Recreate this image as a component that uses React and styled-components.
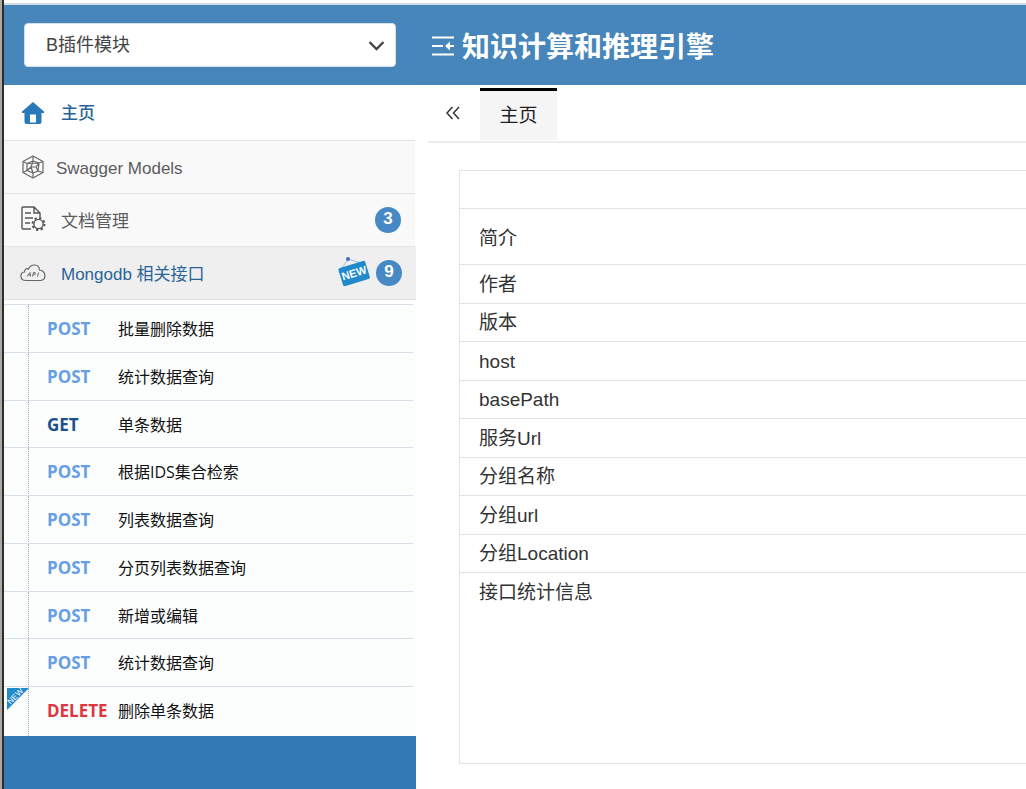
import React from 'react';
import styled, { createGlobalStyle } from 'styled-components';

const GlobalStyle = createGlobalStyle`
  *, *::before, *::after { box-sizing: border-box; }
  body { margin: 0; background: #fff; font-family: "Liberation Sans", "Noto Sans CJK SC", sans-serif; color: #333; }
  a { color: inherit; text-decoration: none; }
  ul { list-style: none; margin: 0; padding: 0; }
`;

const Page = styled.div`
  display: flex;
  flex-direction: column;
  min-height: 100vh;
  border-left: 2px solid #aaa9a4;
  overflow-x: hidden;
`;

const Frame = styled.div`
  flex: 1;
  display: flex;
  flex-direction: column;
  border-left: 2px solid #2e2d2b;
`;

const Header = styled.header`
  display: flex;
  align-items: center;
  height: 85px;
  padding: 5px 20px 0;
  background: linear-gradient(#fff 3px, #d3dee6 3px, #d3dee6 5px, #4686ba 5px);
`;

const SelectWrap = styled.div`
  position: relative;
  width: 372px;
`;

const Select = styled.select`
  display: block;
  width: 100%;
  height: 44px;
  padding: 0 48px 0 21px;
  border: 1px solid #d5e0e8;
  border-radius: 4px;
  background: #fff;
  color: #444;
  font: 18px "Liberation Sans", "Noto Sans CJK SC", sans-serif;
  appearance: none;
`;

const SelectArrow = styled.svg`
  position: absolute;
  right: 11px;
  top: 17px;
  pointer-events: none;
`;

const FoldButton = styled.button`
  display: flex;
  margin-left: 35px;
  padding: 2px 0 0;
  border: 0;
  background: none;
  color: #fff;
`;

const Title = styled.h1`
  margin: 0 0 0 7px;
  padding-top: 5px;
  color: #fff;
  font-size: 28px;
  line-height: 40px;
  font-weight: 700;
  white-space: nowrap;
`;

const Body = styled.div`
  flex: 1;
  display: flex;
`;

const Sidebar = styled.nav`
  flex: none;
  display: flex;
  flex-direction: column;
  width: 412px;
`;

const MenuLink = styled.a`
  display: flex;
  align-items: center;
  height: ${(p) => (p.$home ? 56 : 53)}px;
  padding: 0 14px 0 16px;
  margin-right: ${(p) => (p.$active ? 0 : 1)}px;
  border-bottom: 1px solid #e3e3e5;
  background: ${(p) => (p.$active ? '#efeff0' : p.$home ? '#fefefe' : '#f9f9fa')};
  color: ${(p) => (p.$active || p.$home ? '#2a6496' : '#5c5c5c')};
  font-size: 17px;
  line-height: 24px;
`;

const MenuIcon = styled.span`
  display: flex;
  flex: none;
  width: 26px;
  margin-right: ${(p) => (p.$tight ? 10 : 15)}px;
  justify-content: center;
`;

const MenuText = styled.span`
  flex: 1;
  padding-top: 3px;
  font-weight: ${(p) => (p.$strong ? 500 : 400)};
`;

const Badge = styled.span`
  width: 26px;
  height: 26px;
  border-radius: 50%;
  background: #4789c5;
  color: #fff;
  font-size: 17px;
  line-height: 24px;
  font-weight: 700;
  text-align: center;
`;

const ApiList = styled.ul`
  padding-top: 4px;
  background: #fcfefe;
`;

const ApiItem = styled.li`
  position: relative;
  display: grid;
  height: 48px;

  &:nth-child(4n + 3) { height: 47px; }
  &:last-child { height: 50px; }
`;

const ApiLink = styled.a`
  display: flex;
  margin-right: 3px;
  border-top: 1px solid #d9dfe9;
  color: #111;
  font: 16px/48px "Open Sans", "Noto Sans CJK SC", sans-serif;

  &::before {
    content: "";
    width: 25px;
    margin-right: 18px;
    border-right: 1px dotted #9eacbd;
  }
`;

const methodColors = { POST: '#689fe2', GET: '#1c4f8c', DELETE: '#dc373e' };

const Method = styled.span`
  width: 71px;
  color: ${(p) => methodColors[p.$method]};
  font-size: 17px;
  font-weight: 700;
`;

const Corner = styled.svg`
  position: absolute;
  left: 3px;
  top: 2px;
`;

const SidebarFill = styled.div`
  flex: 1;
  min-height: 53px;
  background: #3379b5;
`;

const Main = styled.main`
  flex: 1;
  min-width: 0;
  padding: 0 0 25px 12px;
`;

const TabBar = styled.div`
  display: flex;
  height: 58px;
  padding-top: 3px;
  border-bottom: 2px solid #ececec;
`;

const CollapseButton = styled.button`
  display: flex;
  align-items: center;
  justify-content: center;
  width: 52px;
  padding: 0 3px 4px 0;
  border: 0;
  background: none;
  color: #333;
`;

const Tab = styled.button`
  width: 77px;
  height: 52px;
  padding: 0 0 4px;
  border: 0;
  border-top: 3px solid #000;
  background: #f5f5f6;
  color: #222;
  font: 19px "Liberation Sans", "Noto Sans CJK SC", sans-serif;
`;

const Panel = styled.section`
  min-height: 594px;
  margin: 27px 0 0 31px;
  border: 1px solid #e2e2e2;
  border-right: 0;
`;

const InfoTable = styled.table`
  width: 100%;
  border-collapse: separate;
  border-spacing: 0;
  color: #333;
  font-size: 19px;
  line-height: 24px;

  th, td {
    height: 38px;
    padding: 1px 19px 0;
    border-bottom: 1px solid #e2e2e2;
    font-weight: 400;
    text-align: left;
  }
  tbody tr:nth-child(even) > * { height: 39px; }
  tbody tr:first-child > * { height: 56px; padding-top: 4px; }
  tbody tr:last-child > * { border-bottom: 0; }
`;

const HomeIcon = () => (
  <svg width="22" height="22" viewBox="0 0 22 22" aria-hidden="true">
    <path fill="#2978b8" fillRule="evenodd" d="M11 0 22 9.500V11H19.500V20Q19.500 22 17.500 22H4.500Q2.500 22 2.500 20V11H0V9.500ZM8 12.500V20.500H14V12.500Z" />
  </svg>
);

const ModelIcon = () => (
  <svg width="22" height="24" viewBox="0 0 22 24" fill="none" stroke="#666" strokeWidth="1.2" strokeLinejoin="round" aria-hidden="true">
    <path d="M11 1 21 6.500V17.500L11 23 1 17.500V6.500Z" />
    <path d="M11 1V6M1 6.500 5 8.500M21 6.500 17 8M1 17.500 5 15.500M21 17.500 16 16M11 23V18M5 8.500 17 8 16 16 11 18 5 15.500ZM5 8.500 11 6 17 8M11 6 9 12 5 15.500M9 12H14L17 8M14 12 16 16M9 12 11 18" />
  </svg>
);

const DocIcon = () => (
  <svg width="26" height="28" viewBox="0 0 26 28" fill="none" stroke="#555" strokeWidth="1.400" aria-hidden="true">
    <path d="M11 23H3Q2 23 2 22V2Q2 1 3 1H14L20 7V11M14 1V7H20M5 7H11M5 12H13M5 17H10" />
    <circle cx="18.500" cy="18" r="4.600" />
    <circle cx="18.500" cy="18" r="6" strokeDasharray="2.300 2.400" strokeWidth="2" />
  </svg>
);

const CloudIcon = () => (
  <svg width="26" height="18" viewBox="0 0 26 18" fill="none" stroke="#666" strokeWidth="1.200" aria-hidden="true">
    <path d="M6 16.500C-.5 16.500-.5 8.500 4.500 8 4.500 5 7 4 8.500 5 11-.5 19-.5 19.500 6 26 6.500 27 16.500 20.500 16.500Z" />
    <path strokeWidth="1" d="M7 12.500 10 8.500 10.500 12.500M8.500 11H10.500M12.500 12.500 13.500 8.500H15Q16.500 10.500 13.500 11M17.500 12.500 18.500 8.500" />
  </svg>
);

const NewTag = () => (
  <svg width="32" height="30" viewBox="0 0 32 30" aria-hidden="true">
    <path d="M4 12 10 3 23 7" fill="none" stroke="#9dbdd4" />
    <circle cx="10" cy="3" r="2" fill="#3f6fc0" />
    <g transform="rotate(-17 16 17)">
      <rect x="2" y="8" width="28" height="19" rx="2" fill="#208acb" />
      <text x="16" y="21" textAnchor="middle" fill="#fff" fontFamily="Liberation Sans, sans-serif" fontSize="11" fontWeight="700">NEW</text>
    </g>
  </svg>
);

const TagSlot = styled.span`
  display: flex;
  margin-right: 6px;
  padding-bottom: 4px;
`;

const menu = [
  { label: '主页', icon: HomeIcon, home: true },
  { label: 'Swagger Models', icon: ModelIcon, tight: true },
  { label: '文档管理', icon: DocIcon, count: 3 },
  { label: 'Mongodb 相关接口', icon: CloudIcon, count: 9, active: true, fresh: true },
];

const apis = [
  ['POST', '批量删除数据'],
  ['POST', '统计数据查询'],
  ['GET', '单条数据'],
  ['POST', '根据IDS集合检索'],
  ['POST', '列表数据查询'],
  ['POST', '分页列表数据查询'],
  ['POST', '新增或编辑'],
  ['POST', '统计数据查询'],
  ['DELETE', '删除单条数据', true],
];

const fields = ['简介', '作者', '版本', 'host', 'basePath', '服务Url', '分组名称', '分组url', '分组Location', '接口统计信息'];

export default function App() {
  return (
    <Page>
      <GlobalStyle />
      <Frame>
        <Header>
          <SelectWrap>
            <Select aria-label="模块" defaultValue="b">
              <option value="b">B插件模块</option>
            </Select>
            <SelectArrow width="17" height="12" viewBox="0 0 17 12" fill="none" stroke="#444" strokeWidth="2.300" aria-hidden="true">
              <path d="M1.500 2 8.500 9 15.500 2" />
            </SelectArrow>
          </SelectWrap>
          <FoldButton aria-label="收起菜单">
            <svg width="24" height="22" viewBox="0 0 24 22" fill="none" stroke="currentColor" strokeWidth="2.200" aria-hidden="true">
              <path d="M1 2.500H23M1 11H12M1 19.500H23M17 11H23" />
              <path d="M14 11 19 6.500V15.500Z" fill="currentColor" stroke="none" />
            </svg>
          </FoldButton>
          <Title>知识计算和推理引擎</Title>
        </Header>
        <Body>
          <Sidebar>
            {menu.map(({ label, icon: Icon, ...item }) => (
              <MenuLink key={label} href="#" $home={item.home} $active={item.active}>
                <MenuIcon $tight={item.tight}><Icon /></MenuIcon>
                <MenuText $strong={item.home}>{label}</MenuText>
                {item.fresh && <TagSlot><NewTag /></TagSlot>}
                {item.count && <Badge>{item.count}</Badge>}
              </MenuLink>
            ))}
            <ApiList>
              {apis.map(([method, name, fresh], i) => (
                <ApiItem key={i}>
                  <ApiLink href="#">
                    <Method $method={method}>{method}</Method>
                    <span>{name}</span>
                  </ApiLink>
                  {fresh && (
                    <Corner width="22" height="22" viewBox="0 0 22 22" aria-hidden="true">
                      <path d="M0 0H22L0 22Z" fill="#208acb" />
                      <text x="8" y="11" transform="rotate(-45 8 8)" textAnchor="middle" fill="#fff" fontFamily="Liberation Sans, sans-serif" fontSize="8">NEW</text>
                    </Corner>
                  )}
                </ApiItem>
              ))}
            </ApiList>
            <SidebarFill />
          </Sidebar>
          <Main>
            <TabBar>
              <CollapseButton aria-label="向左滚动">
                <svg width="14" height="14" viewBox="0 0 14 14" fill="none" stroke="currentColor" strokeWidth="1.500" aria-hidden="true">
                  <path d="M6.500 1 1 7 6.500 13M13 1 7.500 7 13 13" />
                </svg>
              </CollapseButton>
              <Tab>主页</Tab>
            </TabBar>
            <Panel>
              <InfoTable>
                <thead><tr><th scope="col" aria-label="字段" /></tr></thead>
                <tbody>
                  {fields.map((f) => <tr key={f}><th scope="row">{f}</th></tr>)}
                </tbody>
              </InfoTable>
            </Panel>
          </Main>
        </Body>
      </Frame>
    </Page>
  );
}
